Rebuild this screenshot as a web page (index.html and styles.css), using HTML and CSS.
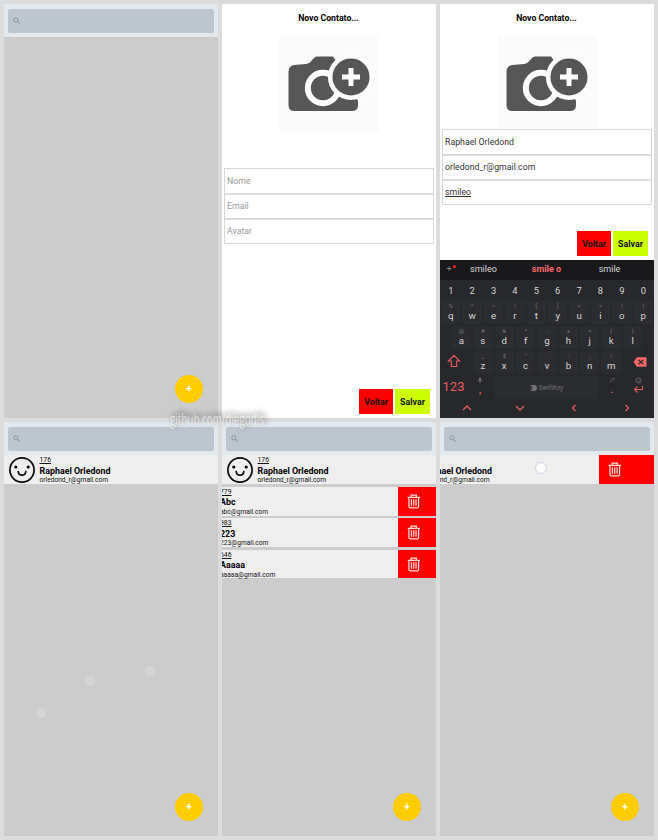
FILE: index.html
```
<!DOCTYPE html>
<html lang="pt-BR">
<head>
<meta charset="utf-8">
<title>Contatos</title>
<link rel="stylesheet" href="styles.css">
</head>
<body>
<svg class="defs" width="0" height="0">
  <defs>
    <pattern id="hatch" width="4" height="4" patternUnits="userSpaceOnUse"><path d="M-1 1L1-1M0 4L4 0M3 5L5 3" stroke="#f1f1f1" stroke-width=".8"/></pattern>
    <symbol id="search" viewBox="0 0 8 8"><circle cx="3" cy="3" r="2.2" fill="none" stroke="#8896a1"/><path d="M4.7 4.7L7.3 7.2" stroke="#8896a1" stroke-width="1.1"/></symbol>
    <symbol id="face" viewBox="0 0 26 26"><circle cx="13" cy="13" r="12.1" fill="none" stroke="#080808" stroke-width="1.7"/><circle cx="6.8" cy="10" r="1.6"/><circle cx="19.2" cy="10" r="1.6"/><path d="M9.2 14.6c.7 4.8 6.9 4.8 7.6 0" fill="none" stroke="#080808" stroke-width="1.7" stroke-linecap="round"/></symbol>
    <symbol id="trash" viewBox="0 0 14 15"><path d="M.6 3.1H13.4M4.3 3V.9H9.7V3M2 3.1V12.6Q2 14 3.4 14H10.6Q12 14 12 12.6V3.1M4.6 5.2V12M7 5.2V12M9.4 5.2V12" fill="none" stroke="#ffdede" stroke-width="1.3"/></symbol>
    <symbol id="camera" viewBox="0 0 100 98"><rect width="100" height="98" fill="#fdfdfd"/><rect width="100" height="98" fill="url(#hatch)"/><path d="M9.5 37Q9.5 31 15 30L27 29Q31 28.500 33 25L35 23Q36 21.500 38 21.500H54L65 37L79 66V70Q79 76 73 76H15.500Q9.500 76 9.500 70Z" fill="#565656"/><circle cx="44" cy="53" r="15.200" fill="#565656" stroke="#fdfdfd" stroke-width="6"/><circle cx="72" cy="42" r="20.800" fill="#565656" stroke="#fdfdfd" stroke-width="4.500"/><path d="M72 33V51M63 42H81" stroke="#fdfdfd" stroke-width="5"/></symbol>
  </defs>
</svg>
<main class="gallery">
  <section class="screen list">
    <header class="bar"><div class="search"><svg><use href="#search"/></svg></div></header>
    <button class="fab">+</button>
  </section>

  <section class="screen form">
    <h1>Novo Contato...</h1>
    <svg class="photo"><use href="#camera"/></svg>
    <div class="fields empty"><div>Nome</div><div>Email</div><div>Avatar</div></div>
    <div class="actions bottom"><button class="back">Voltar</button><button class="save">Salvar</button></div>
  </section>

  <section class="screen form typing">
    <h1>Novo Contato...</h1>
    <svg class="photo"><use href="#camera"/></svg>
    <div class="fields"><div>Raphael Orledond</div><div>orledond_r@gmail.com</div><div><u>smileo</u></div></div>
    <div class="actions"><button class="back">Voltar</button><button class="save">Salvar</button></div>
    <div class="keyboard">
      <div class="suggest"><i>+<b></b></i><span>smileo</span><span class="hot">smile o</span><span>smile</span></div>
      <div class="keys numbers"><span>1</span><span>2</span><span>3</span><span>4</span><span>5</span><span>6</span><span>7</span><span>8</span><span>9</span><span>0</span></div>
      <div class="keys letters"><span><small>%</small>q</span><span><small>^</small>w</span><span><small>~</small>e</span><span><small>|</small>r</span><span><small>[</small>t</span><span><small>]</small>y</span><span><small>&lt;</small>u</span><span><small>&gt;</small>i</span><span><small>(</small>o</span><span><small>)</small>p</span></div>
      <div class="keys letters"><span><small>@</small>a</span><span><small>#</small>s</span><span><small>&amp;</small>d</span><span><small>*</small>f</span><span><small>-</small>g</span><span><small>+</small>h</span><span><small>=</small>j</span><span><small>(</small>k</span><span><small>)</small>l</span></div>
      <div class="keys letters">
        <div class="edge"><svg width="14" height="14" viewBox="0 0 14 14"><path d="M7 1.300L12.600 7H9.700V12.500H4.300V7H1.400Z" fill="none" stroke="#e65d5e" stroke-width="1.100"/></svg></div>
        <span><small>_</small>z</span><span><small>$</small>x</span><span><small>"</small>c</span><span><small>'</small>v</span><span><small>:</small>b</span><span><small>;</small>n</span><span><small>/</small>m</span>
        <div class="edge"><svg width="14" height="10" viewBox="0 0 14 10"><path d="M4 .3H13Q13.500.3 13.500 1V9Q13.500 9.700 13 9.700H4L.5 5Z" fill="#fc686a"/><path d="M5.500 2.700L10.300 7.300M10.300 2.700L5.500 7.300" stroke="#27282b" stroke-width="1.200"/></svg></div>
      </div>
      <div class="keys command">
        <span class="mode">123</span>
        <span class="stack"><svg width="6" height="7" viewBox="0 0 6 7"><rect x="2" y=".5" width="2" height="3.500" rx="1" fill="#777"/><path d="M.8 3Q1 5 3 5T5.200 3M3 5V6.500" fill="none" stroke="#777" stroke-width=".6"/></svg><b>,</b></span>
        <span class="space"><svg width="9" height="8" viewBox="0 0 9 8"><path d="M1 1H5Q8 1 8 4T5 7H1L4 5H1L4 3.500Z" fill="#727376"/></svg>SwiftKey</span>
        <span class="stack"><small>,!?</small><b>.</b></span>
        <span class="stack enter"><svg width="7" height="7" viewBox="0 0 7 7"><circle cx="3.500" cy="3.500" r="2.600" fill="none" stroke="#777" stroke-width=".7"/><path d="M2 3.800Q3.500 5.600 5 3.800M2.400 2.500H2.900M4.100 2.500H4.600" fill="none" stroke="#777" stroke-width=".6"/></svg><svg width="11" height="9" viewBox="0 0 11 9"><path d="M9.500.8V4.500H1.500M4.500 1.500L1.500 4.500L4.500 7.500" fill="none" stroke="#e65d5e" stroke-width="1.100"/></svg></span>
      </div>
      <div class="arrows">
        <svg viewBox="0 0 10 10"><path d="M1 7L5 3L9 7"/></svg><svg viewBox="0 0 10 10"><path d="M1 3L5 7L9 3"/></svg><svg viewBox="0 0 10 10"><path d="M6.500 2L3.500 5L6.500 8"/></svg><svg viewBox="0 0 10 10"><path d="M3.500 2L6.500 5L3.500 8"/></svg>
      </div>
    </div>
  </section>

  <section class="screen list">
    <header class="bar"><div class="search"><svg><use href="#search"/></svg></div></header>
    <div class="contact"><svg class="face"><use href="#face"/></svg><div class="info"><u>176</u><strong>Raphael Orledond</strong><span>orledond_r@gmail.com</span></div></div>
    <i class="touch t1"></i><i class="touch t2"></i><i class="touch t3"></i>
    <button class="fab">+</button>
  </section>

  <section class="screen list">
    <header class="bar"><div class="search"><svg><use href="#search"/></svg></div></header>
    <div class="contact"><svg class="face"><use href="#face"/></svg><div class="info"><u>176</u><strong>Raphael Orledond</strong><span>orledond_r@gmail.com</span></div></div>
    <div class="contact open"><div class="info"><u>779</u><strong>Abc</strong><span>abc@gmail.com</span></div><div class="delete"><svg><use href="#trash"/></svg></div></div>
    <div class="contact open"><div class="info"><u>983</u><strong>223</strong><span>223@gmail.com</span></div><div class="delete"><svg><use href="#trash"/></svg></div></div>
    <div class="contact open"><div class="info"><u>646</u><strong>Aaaaa</strong><span>aaaaa@gmail.com</span></div><div class="delete"><svg><use href="#trash"/></svg></div></div>
    <button class="fab">+</button>
  </section>

  <section class="screen list">
    <header class="bar"><div class="search"><svg><use href="#search"/></svg></div></header>
    <div class="contact open wide"><div class="info"><strong>Raphael Orledond</strong><span>orledond_r@gmail.com</span></div><div class="delete"><svg><use href="#trash"/></svg></div></div>
    <i class="touch active"></i>
    <button class="fab">+</button>
  </section>
</main>
<div class="watermark">github.com/diegodls</div>
</body>
</html>
```
FILE: styles.css
```
* { box-sizing: border-box; }
body { margin: 0; background: #dcdcdc; font-family: Roboto, "Liberation Sans", sans-serif; color: #111; }
button { border: 0; padding: 0; font: inherit; }
svg { display: block; flex: none; }
.defs { position: absolute; }
.gallery { display: grid; grid-template-columns: repeat(3, 214px); grid-template-rows: repeat(2, 414px); gap: 4px; padding: 4px; height: 840px; }
.screen { position: relative; overflow: hidden; display: flex; flex-direction: column; }
.list { background: #ccc; }
.form { background: #fff; align-items: center; }

.bar { height: 33.400px; flex: none; padding: 5px 4px; background: #e1e8ee; }
.search { height: 24px; background: #bdc6cf; border-radius: 2px; padding: 8px 5px; }
.search svg { width: 7.500px; height: 7.500px; }
.fab { position: absolute; right: 15px; bottom: 15px; width: 28px; height: 28px; border-radius: 50%; background: #fc0; color: #fff; font-size: 11px; font-weight: 700; line-height: 28px; }

.contact { height: 28.800px; flex: none; margin-bottom: 2.600px; background: #eee; display: flex; }
.face { width: 26px; height: 26px; margin: 1.600px 4.500px 0 5px; }
.info { display: flex; flex-direction: column; white-space: nowrap; flex: 1; min-width: 0; }
.info u { font-size: 6.800px; line-height: 10px; height: 9.500px; }
.info strong { font-size: 8.900px; line-height: 12px; height: 11.500px; color: #000; }
.info span { font-size: 6.650px; line-height: 9px; }
.open .info { margin-left: -2px; }
.wide .info { margin-left: -19px; padding-top: 9.500px; }
.delete { width: 38px; background: #f00; padding: 7px 9px; }
.wide .delete { width: 55px; padding-left: 8.500px; }
.delete svg { width: 13.500px; height: 15px; }

.form h1 { margin: 8px 1px 0 0; font-size: 8.700px; line-height: 12px; font-weight: 700; color: #000; }
.photo { width: 100px; height: 98px; margin-top: 11.300px; }
.fields { width: 210px; border: 1px solid #d6d6d6; margin-top: 35px; position: relative; background: #fff; }
.fields div { height: 25px; padding: 0 2px; font-size: 8.750px; line-height: 25px; color: #333; }
.fields div:first-child { height: 24px; }
.fields div + div { border-top: 2px solid #dcdcdc; line-height: 23px; }
.empty div { color: #9a9a9a; }
.typing .fields { margin-top: -4.500px; }
.actions { display: flex; gap: 2px; align-self: flex-end; margin: 26.500px 6px 0; font-size: 8.800px; font-weight: 700; }
.bottom { margin-top: auto; margin-bottom: 4px; }
.actions button { width: 34px; height: 25px; color: #111; }
.actions .save { width: 35px; }
.back { background: #f00; }
.save { background: #cf0; }

.keyboard { margin-top: auto; width: 214px; height: 158.500px; background: #27282b; color: #d6d6d6; }
.suggest { height: 20px; background: #19191b; display: grid; grid-template-columns: 12px 63px 63px 63px; font-size: 9px; line-height: 19px; text-align: center; position: relative; }
.suggest i { position: relative; left: 3px; font-style: normal; color: #888; }
.suggest b { position: absolute; right: -1px; top: 5px; width: 3px; height: 3px; border-radius: 50%; background: #f22; }
.suggest .hot { color: #fc686a; font-weight: 700; }
.keys { display: flex; justify-content: center; height: 25px; }
.keys > span { width: 19.400px; height: 23px; margin: 0 1px; text-align: center; }
.numbers { height: 21.500px; font-size: 9.300px; line-height: 22px; }
.letters > span { background: #2b2c2f; border-radius: 2px; font-size: 9.700px; line-height: 11px; padding-top: 2px; }
.keys small { display: block; font-size: 5.500px; line-height: 7px; color: #7c7d80; }
.edge { width: 32.100px; display: flex; justify-content: center; padding: 3px 4px 0 0; }
.edge:last-child { padding: 6px 7px 0 0; justify-content: flex-end; }
.keys > .mode { width: 27px; font-size: 13px; line-height: 22px; color: #e65d5e; margin-left: 0; margin-right: 0; }
.keys > .space { width: 104px; margin: 0 1px; background: #2b2c2f; border-radius: 2px; display: flex; align-items: center; justify-content: center; color: #727376; font-size: 6.300px; gap: 1px; }
.stack { display: flex; flex-direction: column; align-items: center; padding-top: 1px; font-size: 9px; line-height: 12px; color: #e65d5e; }
.keys > .stack { width: 24px; }
.command { padding-right: 3px; }
.enter { gap: 1px; }
.arrows { display: grid; grid-template-columns: repeat(4, 1fr); justify-items: center; padding-top: 2px; }
.arrows svg { width: 10px; height: 10px; fill: none; stroke: #e65d5e; stroke-width: 1.300; }

.touch { position: absolute; width: 10px; height: 10px; border-radius: 50%; background: #d5d5d5; }
.t1 { left: 32px; top: 286px; }
.t2 { left: 81px; top: 254px; }
.t3 { left: 141px; top: 244px; }
.active { left: 94.500px; top: 40px; width: 12px; height: 12px; background: #fafafa; border: 1px solid #ccd1e6; }
.watermark { position: absolute; left: 170px; top: 409px; font-family: "Open Sans", sans-serif; font-size: 16px; line-height: 20px; color: rgba(255,255,255,.6); transform: scaleX(.615); transform-origin: left; text-shadow: 3px -2px 7px rgba(0,0,0,.3), 5px -3px 10px rgba(0,0,0,.3); white-space: nowrap; }
```
